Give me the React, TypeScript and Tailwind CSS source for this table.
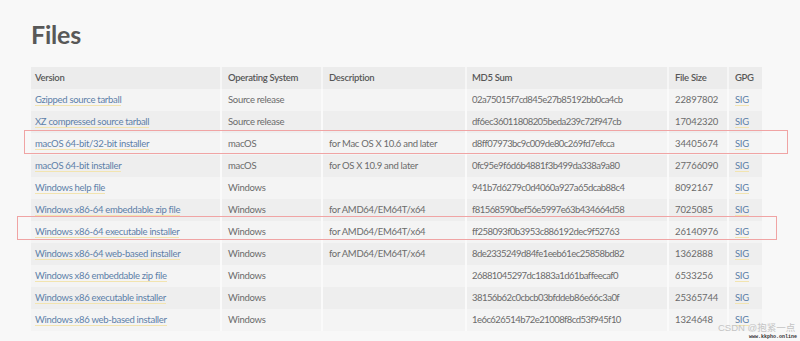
import React from 'react';

const ROWS = [
  { v: 'Gzipped source tarball', os: 'Source release', d: '', md5: '02a75015f7cd845e27b85192bb0ca4cb', size: '22897802' },
  { v: 'XZ compressed source tarball', os: 'Source release', d: '', md5: 'df6ec36011808205beda239c72f947cb', size: '17042320' },
  { v: 'macOS 64-bit/32-bit installer', os: 'macOS', d: 'for Mac OS X 10.6 and later', md5: 'd8ff07973bc9c009de80c269fd7efcca', size: '34405674' },
  { v: 'macOS 64-bit installer', os: 'macOS', d: 'for OS X 10.9 and later', md5: '0fc95e9f6d6b4881f3b499da338a9a80', size: '27766090' },
  { v: 'Windows help file', os: 'Windows', d: '', md5: '941b7d6279c0d4060a927a65dcab88c4', size: '8092167' },
  { v: 'Windows x86-64 embeddable zip file', os: 'Windows', d: 'for AMD64/EM64T/x64', md5: 'f81568590bef56e5997e63b434664d58', size: '7025085' },
  { v: 'Windows x86-64 executable installer', os: 'Windows', d: 'for AMD64/EM64T/x64', md5: 'ff258093f0b3953c886192dec9f52763', size: '26140976' },
  { v: 'Windows x86-64 web-based installer', os: 'Windows', d: 'for AMD64/EM64T/x64', md5: '8de2335249d84fe1eeb61ec25858bd82', size: '1362888' },
  { v: 'Windows x86 embeddable zip file', os: 'Windows', d: '', md5: '26881045297dc1883a1d61baffeecaf0', size: '6533256' },
  { v: 'Windows x86 executable installer', os: 'Windows', d: '', md5: '38156b62c0cbcb03bfddeb86e66c3a0f', size: '25365744' },
  { v: 'Windows x86 web-based installer', os: 'Windows', d: '', md5: '1e6c626514b72e21008f8cd53f945f10', size: '1324648' },
];

const Link: React.FC<{ children: React.ReactNode }> = ({ children }) => (
  <a href="#" className="text-[#5d7fa8] border-b border-[#f2e4b0] leading-[13px]">{children}</a>
);

export default function App() {
  return (
    <div className="relative w-[800px] h-[341px] overflow-hidden bg-[#f8f8f8] text-[#6b6b6b]" style={{ fontFamily: 'Lato, "Noto Sans", sans-serif' }}>
      <div className="pl-[31px] pt-[19px]">
        <h1 className="text-[25px] font-bold text-[#585858] leading-[30px] tracking-[-0.2px]">Files</h1>

        <table className="mt-[18px] w-[731px] table-fixed border-collapse text-[9.5px] tracking-[-0.3px]">
          <colgroup>
            <col className="w-[190px]" />
            <col className="w-[101px]" />
            <col className="w-[144px]" />
            <col className="w-[202px]" />
            <col className="w-[60px]" />
            <col className="w-[34px]" />
          </colgroup>
          <thead>
            <tr className="bg-[#ececec] h-[22px] text-left text-[#575757]">
              <th className="pl-[4px] font-semibold">Version</th>
              <th className="pl-[6px] font-semibold border-l-2 border-[#f6f6f6]">Operating System</th>
              <th className="pl-[6px] font-semibold border-l-2 border-[#f6f6f6]">Description</th>
              <th className="pl-[5px] font-semibold border-l-2 border-[#f6f6f6]">MD5 Sum</th>
              <th className="pl-[6px] font-semibold border-l-2 border-[#f6f6f6]">File Size</th>
              <th className="pl-[6px] font-semibold border-l-2 border-[#f6f6f6]">GPG</th>
            </tr>
          </thead>
          <tbody>
            {ROWS.map((r, i) => (
              <tr key={i} className={`h-[22px] ${i % 2 === 0 ? 'bg-[#f4f4f4]' : 'bg-[#eeeeee]'}`}>
                <td className="pl-[4px] whitespace-nowrap"><Link>{r.v}</Link></td>
                <td className="pl-[6px] border-l-2 border-[#fafafa]">{r.os}</td>
                <td className="pl-[6px] border-l-2 border-[#fafafa] whitespace-nowrap">{r.d}</td>
                <td className="pl-[5px] border-l-2 border-[#fafafa] whitespace-nowrap tracking-[-0.55px]">{r.md5}</td>
                <td className="pl-[6px] border-l-2 border-[#fafafa] tracking-[-0.1px]">{r.size}</td>
                <td className="pl-[6px] border-l-2 border-[#fafafa]"><Link>SIG</Link></td>
              </tr>
            ))}
          </tbody>
        </table>
      </div>

      {/* red annotation boxes */}
      <div className="absolute left-[24px] top-[130px] w-[764px] h-[24px] border border-[#f0a4a4]" />
      <div className="absolute left-[17px] top-[216px] w-[760px] h-[24px] border border-[#f0a4a4]" />

      {/* watermark */}
      <div className="absolute left-[718px] top-[322px] text-[9.5px] text-[#c4c4c4] leading-[11px] whitespace-nowrap" style={{ fontFamily: '"Liberation Sans", "Noto Sans CJK SC", sans-serif' }}>CSDN @抱紧一点</div>
      <div className="absolute left-[749px] top-[334px] text-[5px] text-[#333] leading-[6px] font-bold whitespace-nowrap" style={{ fontFamily: '"Liberation Mono", monospace' }}>www.kkpho.online</div>
    </div>
  );
}
